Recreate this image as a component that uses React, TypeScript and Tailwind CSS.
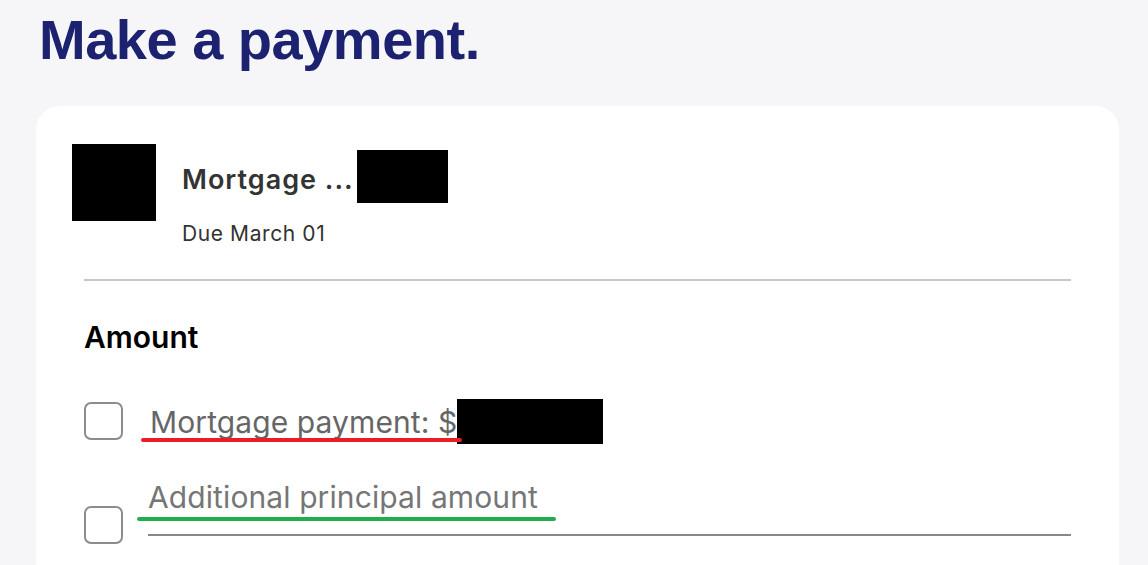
import { useState } from 'react';

export default function App() {
  const [payFull, setPayFull] = useState(false);
  const [payExtra, setPayExtra] = useState(false);
  const [extra, setExtra] = useState('');

  return (
    <main className="min-h-screen bg-[#f6f6f9] overflow-hidden font-['Inter',sans-serif]">
      <div className="pl-[36px] pr-[29px] pt-[8px]">
        {/* Header */}
        <h1 className="pl-[3px] text-[56px] leading-[64px] font-bold tracking-[-0.5px] text-[#1c2270] font-['Liberation_Sans',sans-serif]">
          Make a payment.
        </h1>

        {/* Card */}
        <section className="mt-[34px] bg-white rounded-t-[24px] min-h-[480px] pb-10">
          {/* Loan summary */}
          <div className="flex items-start pl-[36px] pt-[38px]">
            <div className="w-[84px] h-[77px] bg-black shrink-0" />
            <div className="ml-[26px] mt-[6px]">
              <div className="flex items-start">
                <span className="mt-[14px] text-[27px] leading-[32px] font-semibold tracking-[1px] text-[#333333]">
                  Mortgage ...
                </span>
                <span className="ml-[3px] w-[91px] h-[53px] bg-black" />
              </div>
              <p className="mt-[19px] text-[21px] leading-[24px] tracking-[0.6px] text-[#333333]">Due March 01</p>
            </div>
          </div>

          <div className="px-[48px]">
            <div className="mt-[33px] h-[2px] bg-[#c8c8c8]" />

            <h2 className="mt-[38px] text-[30px] leading-[36px] font-semibold text-black">Amount</h2>

            {/* Full payment option */}
            <div className="mt-[44px] flex items-start">
              <button
                type="button"
                onClick={() => setPayFull(!payFull)}
                className={`mt-[3px] w-[39px] h-[38px] shrink-0 rounded-[7px] border-2 border-[#8c8c8c] ${payFull ? 'bg-[#1c2270]' : 'bg-white'}`}
                aria-label="Mortgage payment"
              />
              <div className="relative ml-[27px] flex items-start">
                <span className="mt-[5px] text-[30px] leading-[36px] tracking-[0.1px] text-[#666666]">
                  Mortgage payment: $
                </span>
                <span className="w-[146px] h-[45px] bg-black" />
                <span className="absolute left-[-9px] top-[39px] w-[321px] h-[4px] rounded-full bg-[#ec1c24]" />
              </div>
            </div>

            {/* Additional principal option */}
            <div className="mt-[35px] flex items-start">
              <button
                type="button"
                onClick={() => setPayExtra(!payExtra)}
                className={`mt-[27px] w-[39px] h-[38px] shrink-0 rounded-[7px] border-2 border-[#8c8c8c] ${payExtra ? 'bg-[#1c2270]' : 'bg-white'}`}
                aria-label="Additional principal amount"
              />
              <div className="relative ml-[25px] flex-1 border-b-2 border-[#888888] pb-[19px]">
                <input
                  value={extra}
                  onChange={(e) => setExtra(e.target.value)}
                  placeholder="Additional principal amount"
                  className="w-full h-[36px] text-[30px] leading-[36px] tracking-[0.1px] text-[#333333] placeholder:text-[#767676] bg-transparent outline-none"
                />
                <span className="absolute left-[-11px] top-[38px] w-[419px] h-[4px] rounded-full bg-[#22ad4c]" />
              </div>
            </div>
          </div>
        </section>
      </div>
    </main>
  );
}
